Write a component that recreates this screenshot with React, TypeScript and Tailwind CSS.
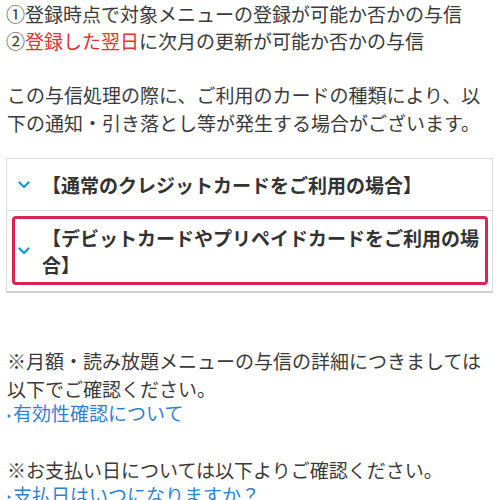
import { ReactNode } from 'react';

const font = { fontFamily: '"Noto Sans CJK JP", "Noto Sans", sans-serif' };

function Chevron() {
  return (
    <svg viewBox="0 0 12 8" className="h-[8px] w-[12px] shrink-0 text-[#1b9ccf]" fill="none" stroke="currentColor" strokeWidth="2.4" strokeLinecap="round" strokeLinejoin="round">
      <path d="M1.5 1.5 6 6l4.5-4.5" />
    </svg>
  );
}

function Bullet() {
  return (
    <svg viewBox="0 0 6 8" className="mr-[1px] inline-block h-[8px] w-[5px] align-middle">
      <path d="M1 1.5 5 4 1 6.5z" fill="#2f7fd5" />
    </svg>
  );
}

function AccordionItem({ children, highlighted = false, last = false }: { children: ReactNode; highlighted?: boolean; last?: boolean }) {
  return (
    <div className={`relative flex items-center gap-[12px] pl-[11px] pr-[10px] ${highlighted ? 'pt-[13px] pb-[13px]' : 'py-[12px]'} ${last ? '' : 'border-b border-[#d9d9d9]'}`}>
      <Chevron />
      <span className="text-[19px] font-bold leading-[27px] text-[#333]">{children}</span>
      {highlighted && (
        <div className="pointer-events-none absolute top-[5px] left-[5px] right-[4px] bottom-[6px] rounded-[4px] border-[3px] border-[#dc2453]" />
      )}
    </div>
  );
}

export default function App() {
  return (
    <div className="h-[500px] w-[500px] overflow-hidden bg-white px-[7px] text-[19px] text-[#3a3a3a]" style={font}>
      <div className="leading-[27px]">
        <p className="-ml-[1px]">①登録時点で対象メニューの登録が可能か否かの与信</p>
        <p className="-ml-[1px]">
          ②<span className="text-[#e3312f]">登録した翌日</span>に次月の更新が可能か否かの与信
        </p>
        <br />
        <p className="leading-[27.5px]">この与信処理の際に、ご利用のカードの種類により、以下の通知・引き落とし等が発生する場合がございます。</p>
      </div>

      <div className="mt-[22px] -ml-[1px] border border-[#dcdcdc] border-b-[2px] border-b-[#cfcfcf]">
        <AccordionItem>【通常のクレジットカードをご利用の場合】</AccordionItem>
        <AccordionItem highlighted last>
          【デビットカードやプリペイドカードをご利用の場合】
        </AccordionItem>
      </div>

      <div className="mt-[54px]">
        <p className="leading-[27.5px]">※月額・読み放題メニューの与信の詳細につきましては以下でご確認ください。</p>
        <a href="#" className="block leading-[22px] text-[#2f7fd5]">
          <Bullet />有効性確認について
        </a>
        <div className="h-[32px]" />
        <p className="leading-[27.5px]">※お支払い日については以下よりご確認ください。</p>
        <a href="#" className="block leading-[22px] text-[#2f7fd5]">
          <Bullet />支払日はいつになりますか？
        </a>
      </div>
    </div>
  );
}
